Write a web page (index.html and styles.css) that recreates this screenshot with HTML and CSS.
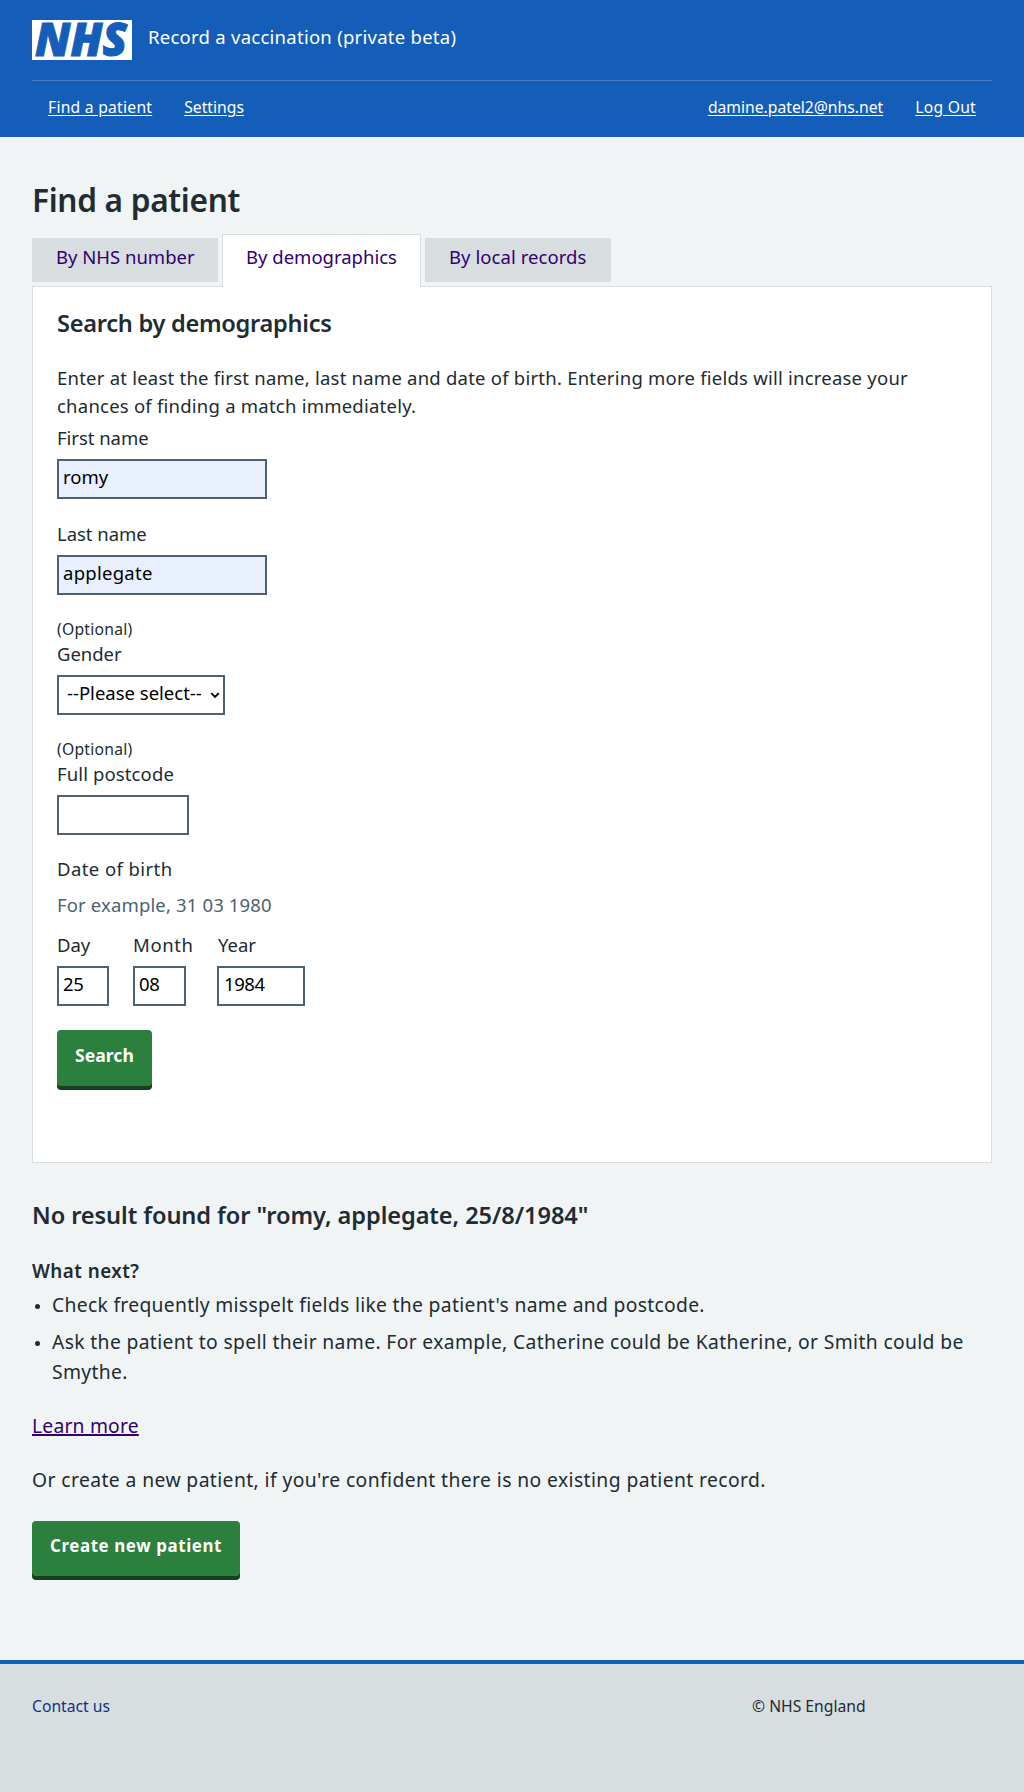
FILE: index.html
```html
<!DOCTYPE html>
<html lang="en">
<head>
<meta charset="utf-8">
<title>Find a patient</title>
<link rel="stylesheet" href="styles.css">
</head>
<body>
<header class="header">
  <div class="header-top">
    <svg class="logo" viewBox="0 0 100 40" width="100" height="40" role="img" aria-label="NHS">
      <rect width="100" height="40" fill="#fff"/>
      <text class="logo-text" x="3" y="36.3" textLength="92" lengthAdjust="spacingAndGlyphs">NHS</text>
    </svg>
    <span class="service">Record a vaccination (private beta)</span>
  </div>
  <nav class="nav">
    <a class="nav-find" href="#">Find a patient</a>
    <a href="#">Settings</a>
    <a class="nav-user" href="#">damine.patel2@nhs.net</a>
    <a class="nav-logout" href="#">Log Out</a>
  </nav>
</header>

<main class="main">
  <h1>Find a patient</h1>
  <div class="tabs">
    <a class="tab" href="#">By NHS number</a>
    <a class="tab tab-active" href="#">By demographics</a>
    <a class="tab tab-local" href="#">By local records</a>
  </div>
  <section class="panel">
    <h2>Search by demographics</h2>
    <p class="intro">Enter at least the first name, last name and date of birth. Entering more fields will increase your chances of finding a match immediately.</p>
    <form>
      <div class="field">
        <label for="first">First name</label>
        <input class="input autofill" id="first" value="romy">
      </div>
      <div class="field">
        <label for="last">Last name</label>
        <input class="input autofill loose" id="last" value="applegate">
      </div>
      <div class="field field-optional">
        <span class="optional">(Optional)</span>
        <label for="gender">Gender</label>
        <div class="select-wrap">
          <select class="input select" id="gender"><option>--Please select--</option></select>
          <svg class="chevron" viewBox="0 0 10 7" width="10" height="7"><path d="M1.2 1.2 5 5l3.800-3.800" fill="none" stroke="#000" stroke-width="1.900"/></svg>
        </div>
      </div>
      <div class="field field-optional">
        <span class="optional">(Optional)</span>
        <label class="postcode-label" for="postcode">Full postcode</label>
        <input class="input postcode" id="postcode">
      </div>
      <div class="field">
        <div class="legend">Date of birth</div>
        <div class="hint">For example, 31 03 1980</div>
        <div class="dates">
          <div><label for="day">Day</label><input class="input day" id="day" value="25"></div>
          <div><label class="month-label" for="month">Month</label><input class="input month" id="month" value="08"></div>
          <div><label class="year-label" for="year">Year</label><input class="input year" id="year" value="1984"></div>
        </div>
      </div>
      <button class="button search" type="button">Search</button>
    </form>
  </section>

  <section class="results">
    <h2 class="results-title">No result found for "romy, applegate, 25/8/1984"</h2>
    <h3>What next?</h3>
    <ul class="list">
      <li class="check">Check frequently misspelt fields like the patient's name and postcode.</li>
      <li>Ask the patient to spell their name. For example, Catherine could be Katherine, or Smith could be Smythe.</li>
    </ul>
    <p class="learn"><a href="#">Learn more</a></p>
    <p class="create-text">Or create a new patient, if you're confident there is no existing patient record.</p>
    <button class="button create" type="button">Create new patient</button>
  </section>
</main>

<footer class="footer">
  <a href="#">Contact us</a>
  <span class="copyright">© NHS England</span>
</footer>
</body>
</html>
```
FILE: styles.css
```css
* { box-sizing: border-box; }
body {
  margin: 0;
  min-height: 1792px;
  display: flex;
  flex-direction: column;
  background: #f0f4f5;
  color: #212b32;
  font: 18.5px/28px "Noto Sans", sans-serif;
}
h1, h2, h3, p, ul { margin: 0; padding: 0; }

.header { height: 137px; padding: 0 32px; background: #145eb9; color: #fff; }
.header-top {
  display: flex;
  gap: 16px;
  height: 81px;
  padding-top: 20px;
  border-bottom: 1px solid #437ec7;
}
.logo { display: block; overflow: visible; }
.logo-text {
  font: italic 800 46px "Open Sans", sans-serif;
  fill: #145eb9;
  stroke: #145eb9;
  stroke-width: 1;
}
.service { padding-top: 3px; letter-spacing: .26px; }
.nav { display: flex; gap: 32px; padding: 14px 16px 0; font-size: 15.7px; line-height: 24px; }
.nav a { color: #fff; text-underline-offset: 2px; text-decoration-skip-ink: auto; }
.nav-find { letter-spacing: .24px; }
.nav-user { margin-left: auto; }
.nav-logout { letter-spacing: .25px; }

.main { padding: 43px 32px 0; }
h1 { font-size: 31.6px; font-weight: 600; line-height: 40px; letter-spacing: -.3px; }
.tabs { display: flex; align-items: flex-start; gap: 4px; margin-top: 14px; }
.tab {
  width: 186px;
  height: 44px;
  margin-top: 4px;
  padding-left: 24px;
  background: #d8dde0;
  color: #330072;
  line-height: 37px;
  text-decoration: none;
}
.tab-active {
  position: relative;
  width: 199px;
  height: 53px;
  margin: 0 0 -1px;
  padding: 3px 0 0 23px;
  border: 1px solid #d8dde0;
  border-bottom: 0;
  background: #fff;
}
.tab-local { letter-spacing: .07px; }
.panel { height: 877px; padding: 20px 24px 0; border: 1px solid #d8dde0; background: #fff; }
h2 { font-size: 23.6px; font-weight: 600; line-height: 32px; letter-spacing: -.28px; }
.intro { margin-top: 25px; letter-spacing: .228px; }
.field { margin-bottom: 21px; }
.field label { display: block; margin-bottom: 7px; letter-spacing: -.03px; }
form { margin-top: 4px; }
.field-optional { margin-top: 23px; margin-bottom: 20px; }
.field-optional + .field-optional { margin-top: 23px; }
.optional { display: block; height: 22px; font-size: 15.7px; line-height: 23px; letter-spacing: .25px; }
.field .postcode-label { letter-spacing: .12px; }
.legend { letter-spacing: .42px; }
.hint { margin: 8px 0 12px; color: #4c6272; letter-spacing: .145px; }
.input {
  display: block;
  width: 210px;
  height: 40px;
  margin: 0;
  padding: 0 4px 5px;
  border: 2px solid #4c6272;
  border-radius: 0;
  background: #fff;
  color: #000;
  font: inherit;
}
.autofill { background: #e8f0fe; }
.loose { letter-spacing: .27px; }
.select-wrap { position: relative; width: 168px; }
.select { width: 168px; padding: 0 0 5px 8px; appearance: none; }
.chevron { position: absolute; right: 5px; top: 17px; }
.postcode { width: 132px; }
.dates { display: flex; }
.day { width: 52px; margin-right: 24px; letter-spacing: -.4px; }
.month { width: 53px; letter-spacing: -.4px; }
.field .month-label { width: 84px; letter-spacing: .6px; }
.field .year-label { padding-left: 1px; }
.year { width: 88px; padding-left: 5px; letter-spacing: -.4px; }
.button {
  display: block;
  border: 0;
  border-radius: 4px;
  box-shadow: 0 4px 0 #144021;
  background: #2a803c;
  color: #fff;
  font: 700 17.6px/28px "Noto Sans", sans-serif;
}
.search { width: 95px; height: 56px; margin-top: 24px; padding: 0 0 7px; }
.results { padding-top: 36px; }
.results-title { letter-spacing: -.08px; }
h3 { margin-top: 26px; font-size: 18.8px; font-weight: 600; line-height: 28px; letter-spacing: .47px; }
.list { margin-top: 5px; padding-left: 20px; font-size: 19.3px; line-height: 30px; letter-spacing: .357px; list-style: none; }
.check { letter-spacing: .31px; }
.list li { position: relative; margin-bottom: 7px; }
.list li::before {
  content: "";
  position: absolute;
  left: -17px;
  top: 14px;
  width: 5px;
  height: 5px;
  border-radius: 50%;
  background: #212b32;
}
.learn { margin-top: 24px; font-size: 19.3px; line-height: 30px; letter-spacing: .2px; }
.learn a { color: #330072; text-decoration-thickness: 2px; text-underline-offset: 1px; text-decoration-skip-ink: none; }
.create-text { margin-top: 24px; font-size: 19.3px; line-height: 30px; letter-spacing: .41px; }
.create { width: 208px; height: 55px; margin-top: 26px; padding: 0 0 6px; font-size: 16.9px; letter-spacing: .6px; }

.footer {
  display: flex;
  flex: 1;
  margin-top: 84px;
  padding: 30px 32px 0;
  border-top: 4px solid #145eb9;
  background: #d8dde0;
  font-size: 15.7px;
  line-height: 24px;
}
.footer a { width: 720px; color: #0b3488; text-decoration: none; }
```
